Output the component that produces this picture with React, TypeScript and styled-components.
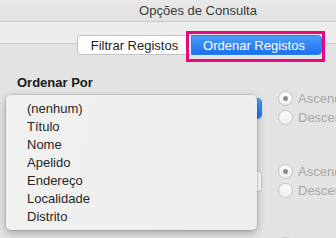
import React from "react";
import styled, { createGlobalStyle } from "styled-components";

const Global = createGlobalStyle`
  html, body { margin: 0; padding: 0; background: #e3e3e3; }
  body { font-family: "Liberation Sans", Arial, sans-serif; }
`;

const Window = styled.div`
  position: relative;
  width: 336px;
  height: 238px;
  overflow: hidden;
  background: #e3e3e3;
  font-family: "Liberation Sans", Arial, sans-serif;
  font-size: 13px;
  color: #222;
`;

const TitleBar = styled.div`
  height: 21px;
  border-bottom: 1px solid #c9c9c9;
  background: linear-gradient(to bottom, #e9e9e9, #e1e1e1);
  display: flex;
  align-items: center;
  justify-content: center;
  padding-left: 60px;
  color: #3a3a3a;
  font-size: 13px;
`;

const Header = styled.div`
  height: 20px;
  padding-top: 13px;
  padding-left: 77px;
  display: flex;
  background: linear-gradient(
    to bottom,
    #ececec 0,
    #ececec 21px,
    #d0d0d0 21px,
    #d0d0d0 22px,
    #e3e3e3 22px
  );
`;

const Segment = styled.div<{ $active?: boolean; $first?: boolean }>`
  height: 20px;
  box-sizing: border-box;
  display: flex;
  align-items: center;
  justify-content: center;
  white-space: nowrap;
  font-size: 13px;
  flex: none;
  width: ${(p) => (p.$active ? "131px" : "114px")};
  padding-right: ${(p) => (p.$active ? "5px" : "0")};
  padding-left: ${(p) => (p.$active ? "0" : "0")};
  border-radius: ${(p) => (p.$first ? "4px 0 0 4px" : "0 4px 4px 0")};
  ${(p) =>
    p.$active
      ? `
    background: linear-gradient(to bottom, #4a9bfb, #1b72f2);
    color: #fff;
    border: 1px solid #2a7ef0;
  `
      : `
    background: #fff;
    color: #1e1e1e;
    border: 1px solid #c4c4c4;
    border-right: none;
  `}
`;

const Highlight = styled.div`
  position: absolute;
  left: 186px;
  top: 31px;
  width: 139px;
  height: 31px;
  box-sizing: border-box;
  border: 3px solid #e5087f;
`;

const Body = styled.div`
  padding: 20px 0 0 17px;
  display: flex;
  flex-direction: column;
  gap: 23px;
`;

const Section = styled.div`
  display: flex;
  flex-direction: column;
`;

const Label = styled.div`
  font-weight: bold;
  line-height: 16px;
  height: 16px;
  color: #1a1a1a;
  white-space: nowrap;
`;

const Row = styled.div`
  display: flex;
  align-items: center;
  height: 34px;
`;

const Popup = styled.div<{ $focused?: boolean }>`
  flex: none;
  width: 245px;
  height: 21px;
  box-sizing: border-box;
  border-radius: 4px;
  background: #fff;
  border: 1px solid ${(p) => (p.$focused ? "#2a7ef0" : "#c4c4c4")};
  display: flex;
  justify-content: flex-end;
  overflow: hidden;
`;

const PopupCap = styled.div<{ $focused?: boolean }>`
  width: 17px;
  height: 100%;
  display: flex;
  flex-direction: column;
  align-items: center;
  justify-content: center;
  gap: 2px;
  background: ${(p) =>
    p.$focused ? "linear-gradient(to bottom, #4a9bfb, #1b72f2)" : "#fff"};
`;

const Chevron = styled.div<{ $focused?: boolean; $down?: boolean }>`
  width: 0;
  height: 0;
  border-left: 3px solid transparent;
  border-right: 3px solid transparent;
  ${(p) =>
    p.$down
      ? `border-top: 3px solid ${p.$focused ? "#fff" : "#555"};`
      : `border-bottom: 3px solid ${p.$focused ? "#fff" : "#555"};`}
`;

const Radios = styled.div`
  flex: none;
  margin-left: 16px;
  display: flex;
  flex-direction: column;
  gap: 4px;
`;

const RadioOption = styled.div`
  display: flex;
  align-items: center;
  gap: 5px;
  height: 15px;
  color: #a8a8a8;
  white-space: nowrap;
`;

const RadioCircle = styled.div<{ $checked?: boolean }>`
  width: 15px;
  height: 15px;
  flex: none;
  box-sizing: border-box;
  border-radius: 50%;
  border: 1px solid #c2c2c2;
  background: linear-gradient(to bottom, #fbfbfb, #efefef);
  display: flex;
  align-items: center;
  justify-content: center;
  &::after {
    content: "";
    width: 5px;
    height: 5px;
    border-radius: 50%;
    background: ${(p) => (p.$checked ? "#8c8c8c" : "transparent")};
  }
`;

const Menu = styled.div`
  position: absolute;
  left: 6px;
  top: 95px;
  width: 251px;
  height: 135px;
  box-sizing: border-box;
  padding-top: 5px;
  border-radius: 5px;
  background: linear-gradient(100deg, #f1f1f1 0%, #efefef 60%, #eceef0 100%);
  box-shadow: 0 0 0 0.5px rgba(0, 0, 0, 0.18), 0 3px 9px rgba(0, 0, 0, 0.28);
`;

const MenuItem = styled.div`
  height: 18px;
  line-height: 18px;
  padding-left: 21px;
  color: #262626;
  font-size: 13px;
`;

const items = [
  "(nenhum)",
  "Título",
  "Nome",
  "Apelido",
  "Endereço",
  "Localidade",
  "Distrito",
];

const sections = [
  { label: "Ordenar Por", focused: true },
  { label: "", focused: false },
  { label: "", focused: false },
];

export default function App() {
  return (
    <Window>
      <Global />
      <TitleBar>Opções de Consulta</TitleBar>
      <Header>
        <Segment $first>Filtrar Registos</Segment>
        <Segment $active>Ordenar Registos</Segment>
      </Header>
      <Body>
        {sections.map((s, i) => (
          <Section key={i}>
            <Label>{s.label}</Label>
            <Row>
              <Popup $focused={s.focused}>
                <PopupCap $focused={s.focused}>
                  <Chevron $focused={s.focused} />
                  <Chevron $focused={s.focused} $down />
                </PopupCap>
              </Popup>
              <Radios>
                <RadioOption>
                  <RadioCircle $checked />
                  Ascendente
                </RadioOption>
                <RadioOption>
                  <RadioCircle />
                  Descendente
                </RadioOption>
              </Radios>
            </Row>
          </Section>
        ))}
      </Body>
      <Menu>
        {items.map((it) => (
          <MenuItem key={it}>{it}</MenuItem>
        ))}
      </Menu>
      <Highlight />
    </Window>
  );
}
